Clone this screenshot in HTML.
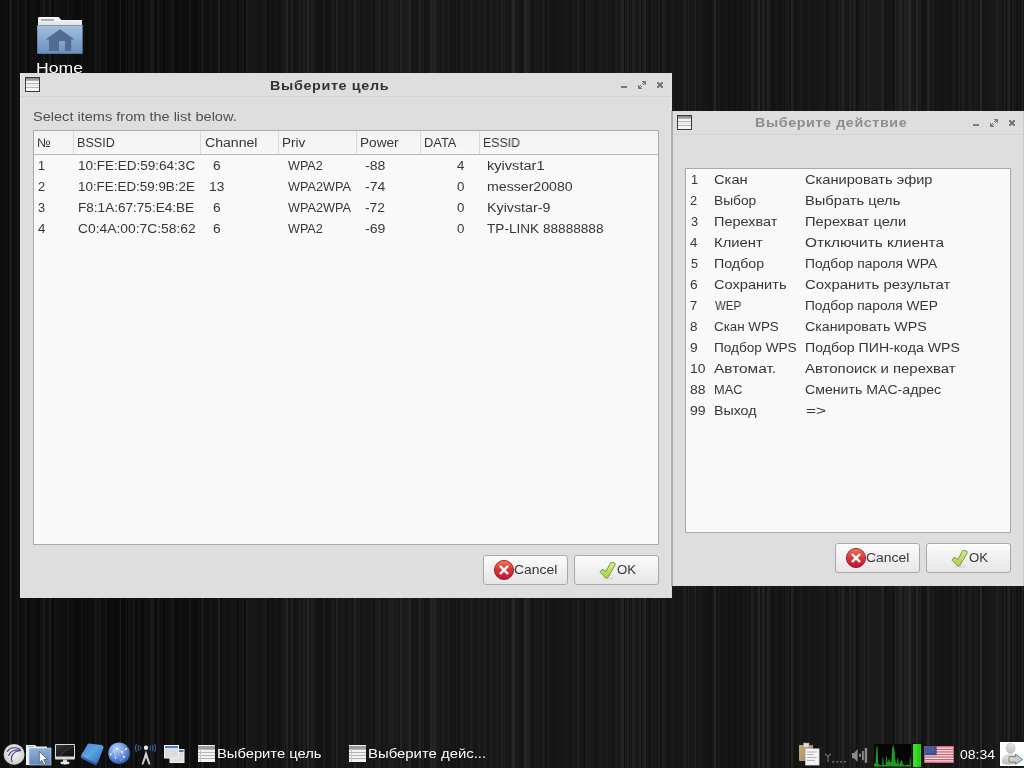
<!DOCTYPE html>
<html><head><meta charset="utf-8">
<style>
html,body{margin:0;padding:0;}
body{width:1024px;height:768px;position:relative;overflow:hidden;background:#1c1c1c;}
.t{position:absolute;white-space:pre;transform-origin:0 0;display:block;will-change:transform;}
#wall{position:absolute;left:0;top:0;width:1024px;height:768px;background:linear-gradient(90deg,rgb(13,13,13) 0px 2px,rgb(11,11,11) 2px 4px,rgb(20,20,20) 4px 5px,rgb(14,14,14) 5px 7px,rgb(17,17,17) 7px 8px,rgb(10,10,10) 8px 9px,rgb(28,28,28) 9px 12px,rgb(11,11,11) 12px 14px,rgb(16,16,16) 14px 17px,rgb(22,22,22) 17px 19px,rgb(11,11,11) 19px 20px,rgb(13,13,13) 20px 21px,rgb(14,14,14) 21px 23px,rgb(18,18,18) 23px 25px,rgb(23,23,23) 25px 27px,rgb(12,12,12) 27px 29px,rgb(15,15,15) 29px 31px,rgb(17,17,17) 31px 34px,rgb(16,16,16) 34px 36px,rgb(12,12,12) 36px 38px,rgb(12,12,12) 38px 39px,rgb(10,10,10) 39px 40px,rgb(16,16,16) 40px 41px,rgb(19,19,19) 41px 43px,rgb(25,25,25) 43px 45px,rgb(16,16,16) 45px 48px,rgb(19,19,19) 48px 49px,rgb(23,23,23) 49px 50px,rgb(29,29,29) 50px 51px,rgb(14,14,14) 51px 52px,rgb(10,10,10) 52px 54px,rgb(19,19,19) 54px 55px,rgb(17,17,17) 55px 56px,rgb(20,20,20) 56px 57px,rgb(15,15,15) 57px 58px,rgb(20,20,20) 58px 59px,rgb(15,15,15) 59px 62px,rgb(18,18,18) 62px 63px,rgb(13,13,13) 63px 64px,rgb(16,16,16) 64px 65px,rgb(17,17,17) 65px 66px,rgb(13,13,13) 66px 67px,rgb(20,20,20) 67px 69px,rgb(14,14,14) 69px 71px,rgb(17,17,17) 71px 73px,rgb(11,11,11) 73px 74px,rgb(14,14,14) 74px 75px,rgb(11,11,11) 75px 78px,rgb(12,12,12) 78px 79px,rgb(12,12,12) 79px 81px,rgb(22,22,22) 81px 82px,rgb(14,14,14) 82px 84px,rgb(13,13,13) 84px 87px,rgb(11,11,11) 87px 89px,rgb(17,17,17) 89px 91px,rgb(14,14,14) 91px 94px,rgb(20,20,20) 94px 95px,rgb(25,25,25) 95px 97px,rgb(15,15,15) 97px 98px,rgb(17,17,17) 98px 99px,rgb(26,26,26) 99px 100px,rgb(14,14,14) 100px 101px,rgb(19,19,19) 101px 102px,rgb(10,10,10) 102px 103px,rgb(14,14,14) 103px 105px,rgb(22,22,22) 105px 107px,rgb(10,10,10) 107px 109px,rgb(15,15,15) 109px 110px,rgb(12,12,12) 110px 112px,rgb(13,13,13) 112px 113px,rgb(15,15,15) 113px 114px,rgb(10,10,10) 114px 116px,rgb(10,10,10) 116px 117px,rgb(13,13,13) 117px 120px,rgb(29,29,29) 120px 121px,rgb(12,12,12) 121px 122px,rgb(11,11,11) 122px 123px,rgb(12,12,12) 123px 124px,rgb(11,11,11) 124px 126px,rgb(23,23,23) 126px 127px,rgb(10,10,10) 127px 128px,rgb(20,20,20) 128px 129px,rgb(20,20,20) 129px 131px,rgb(12,12,12) 131px 132px,rgb(17,17,17) 132px 133px,rgb(24,24,24) 133px 135px,rgb(11,11,11) 135px 137px,rgb(17,17,17) 137px 139px,rgb(21,21,21) 139px 140px,rgb(14,14,14) 140px 141px,rgb(13,13,13) 141px 144px,rgb(19,19,19) 144px 145px,rgb(15,15,15) 145px 146px,rgb(21,21,21) 146px 147px,rgb(18,18,18) 147px 148px,rgb(17,17,17) 148px 150px,rgb(27,27,27) 150px 153px,rgb(30,30,30) 153px 154px,rgb(13,13,13) 154px 155px,rgb(13,13,13) 155px 157px,rgb(21,21,21) 157px 160px,rgb(17,17,17) 160px 162px,rgb(16,16,16) 162px 163px,rgb(12,12,12) 163px 166px,rgb(21,21,21) 166px 167px,rgb(13,13,13) 167px 168px,rgb(19,19,19) 168px 170px,rgb(16,16,16) 170px 171px,rgb(24,24,24) 171px 174px,rgb(11,11,11) 174px 177px,rgb(11,11,11) 177px 178px,rgb(20,20,20) 178px 179px,rgb(17,17,17) 179px 180px,rgb(16,16,16) 180px 182px,rgb(19,19,19) 182px 183px,rgb(12,12,12) 183px 185px,rgb(15,15,15) 185px 187px,rgb(11,11,11) 187px 189px,rgb(29,29,29) 189px 190px,rgb(18,18,18) 190px 191px,rgb(16,16,16) 191px 194px,rgb(11,11,11) 194px 196px,rgb(14,14,14) 196px 198px,rgb(18,18,18) 198px 200px,rgb(12,12,12) 200px 201px,rgb(27,27,27) 201px 204px,rgb(15,15,15) 204px 206px,rgb(15,15,15) 206px 208px,rgb(17,17,17) 208px 209px,rgb(17,17,17) 209px 210px,rgb(21,21,21) 210px 212px,rgb(18,18,18) 212px 213px,rgb(17,17,17) 213px 214px,rgb(16,16,16) 214px 216px,rgb(19,19,19) 216px 218px,rgb(33,33,33) 218px 220px,rgb(13,13,13) 220px 223px,rgb(22,22,22) 223px 226px,rgb(18,18,18) 226px 228px,rgb(23,23,23) 228px 229px,rgb(14,14,14) 229px 230px,rgb(23,23,23) 230px 233px,rgb(22,22,22) 233px 235px,rgb(21,21,21) 235px 237px,rgb(15,15,15) 237px 239px,rgb(24,24,24) 239px 241px,rgb(15,15,15) 241px 242px,rgb(26,26,26) 242px 244px,rgb(15,15,15) 244px 246px,rgb(27,27,27) 246px 248px,rgb(24,24,24) 248px 251px,rgb(24,24,24) 251px 253px,rgb(24,24,24) 253px 254px,rgb(24,24,24) 254px 255px,rgb(22,22,22) 255px 257px,rgb(18,18,18) 257px 259px,rgb(20,20,20) 259px 260px,rgb(22,22,22) 260px 261px,rgb(18,18,18) 261px 262px,rgb(25,25,25) 262px 265px,rgb(28,28,28) 265px 267px,rgb(16,16,16) 267px 269px,rgb(18,18,18) 269px 270px,rgb(25,25,25) 270px 271px,rgb(17,17,17) 271px 273px,rgb(17,17,17) 273px 274px,rgb(23,23,23) 274px 277px,rgb(20,20,20) 277px 279px,rgb(16,16,16) 279px 280px,rgb(19,19,19) 280px 281px,rgb(23,23,23) 281px 283px,rgb(20,20,20) 283px 284px,rgb(32,32,32) 284px 285px,rgb(20,20,20) 285px 286px,rgb(35,35,35) 286px 288px,rgb(21,21,21) 288px 290px,rgb(23,23,23) 290px 291px,rgb(25,25,25) 291px 292px,rgb(37,37,37) 292px 293px,rgb(18,18,18) 293px 296px,rgb(22,22,22) 296px 299px,rgb(29,29,29) 299px 301px,rgb(19,19,19) 301px 303px,rgb(32,32,32) 303px 305px,rgb(25,25,25) 305px 306px,rgb(23,23,23) 306px 307px,rgb(37,37,37) 307px 309px,rgb(21,21,21) 309px 310px,rgb(28,28,28) 310px 312px,rgb(28,28,28) 312px 313px,rgb(30,30,30) 313px 314px,rgb(27,27,27) 314px 315px,rgb(20,20,20) 315px 316px,rgb(23,23,23) 316px 317px,rgb(21,21,21) 317px 319px,rgb(18,18,18) 319px 320px,rgb(19,19,19) 320px 323px,rgb(28,28,28) 323px 325px,rgb(21,21,21) 325px 326px,rgb(18,18,18) 326px 327px,rgb(20,20,20) 327px 330px,rgb(19,19,19) 330px 331px,rgb(27,27,27) 331px 334px,rgb(25,25,25) 334px 335px,rgb(21,21,21) 335px 336px,rgb(35,35,35) 336px 338px,rgb(23,23,23) 338px 341px,rgb(27,27,27) 341px 342px,rgb(28,28,28) 342px 343px,rgb(25,25,25) 343px 345px,rgb(21,21,21) 345px 347px,rgb(25,25,25) 347px 350px,rgb(24,24,24) 350px 352px,rgb(19,19,19) 352px 353px,rgb(28,28,28) 353px 354px,rgb(34,34,34) 354px 356px,rgb(25,25,25) 356px 359px,rgb(27,27,27) 359px 360px,rgb(21,21,21) 360px 362px,rgb(24,24,24) 362px 364px,rgb(25,25,25) 364px 367px,rgb(24,24,24) 367px 369px,rgb(23,23,23) 369px 371px,rgb(26,26,26) 371px 373px,rgb(20,20,20) 373px 375px,rgb(28,28,28) 375px 376px,rgb(28,28,28) 376px 378px,rgb(29,29,29) 378px 380px,rgb(28,28,28) 380px 381px,rgb(20,20,20) 381px 383px,rgb(25,25,25) 383px 386px,rgb(21,21,21) 386px 387px,rgb(22,22,22) 387px 388px,rgb(28,28,28) 388px 391px,rgb(30,30,30) 391px 394px,rgb(25,25,25) 394px 397px,rgb(29,29,29) 397px 398px,rgb(24,24,24) 398px 399px,rgb(20,20,20) 399px 400px,rgb(35,35,35) 400px 402px,rgb(25,25,25) 402px 404px,rgb(26,26,26) 404px 406px,rgb(23,23,23) 406px 407px,rgb(28,28,28) 407px 409px,rgb(38,38,38) 409px 411px,rgb(20,20,20) 411px 413px,rgb(23,23,23) 413px 415px,rgb(24,24,24) 415px 418px,rgb(24,24,24) 418px 419px,rgb(36,36,36) 419px 421px,rgb(23,23,23) 421px 423px,rgb(30,30,30) 423px 424px,rgb(20,20,20) 424px 427px,rgb(24,24,24) 427px 428px,rgb(20,20,20) 428px 429px,rgb(25,25,25) 429px 430px,rgb(36,36,36) 430px 433px,rgb(30,30,30) 433px 434px,rgb(40,40,40) 434px 435px,rgb(33,33,33) 435px 436px,rgb(27,27,27) 436px 439px,rgb(22,22,22) 439px 442px,rgb(28,28,28) 442px 444px,rgb(27,27,27) 444px 445px,rgb(22,22,22) 445px 446px,rgb(24,24,24) 446px 448px,rgb(28,28,28) 448px 450px,rgb(23,23,23) 450px 452px,rgb(21,21,21) 452px 453px,rgb(27,27,27) 453px 454px,rgb(21,21,21) 454px 456px,rgb(28,28,28) 456px 457px,rgb(22,22,22) 457px 458px,rgb(20,20,20) 458px 460px,rgb(26,26,26) 460px 462px,rgb(30,30,30) 462px 463px,rgb(22,22,22) 463px 464px,rgb(23,23,23) 464px 467px,rgb(24,24,24) 467px 468px,rgb(23,23,23) 468px 469px,rgb(23,23,23) 469px 470px,rgb(30,30,30) 470px 473px,rgb(22,22,22) 473px 476px,rgb(23,23,23) 476px 478px,rgb(29,29,29) 478px 480px,rgb(24,24,24) 480px 483px,rgb(28,28,28) 483px 484px,rgb(29,29,29) 484px 485px,rgb(27,27,27) 485px 487px,rgb(22,22,22) 487px 490px,rgb(30,30,30) 490px 492px,rgb(26,26,26) 492px 494px,rgb(23,23,23) 494px 496px,rgb(26,26,26) 496px 497px,rgb(28,28,28) 497px 499px,rgb(22,22,22) 499px 500px,rgb(23,23,23) 500px 501px,rgb(33,33,33) 501px 503px,rgb(23,23,23) 503px 504px,rgb(34,34,34) 504px 505px,rgb(20,20,20) 505px 506px,rgb(27,27,27) 506px 508px,rgb(21,21,21) 508px 510px,rgb(22,22,22) 510px 511px,rgb(28,28,28) 511px 512px,rgb(39,39,39) 512px 515px,rgb(25,25,25) 515px 517px,rgb(25,25,25) 517px 520px,rgb(20,20,20) 520px 522px,rgb(21,21,21) 522px 523px,rgb(20,20,20) 523px 524px,rgb(36,36,36) 524px 527px,rgb(32,32,32) 527px 530px,rgb(23,23,23) 530px 532px,rgb(19,19,19) 532px 533px,rgb(22,22,22) 533px 535px,rgb(29,29,29) 535px 536px,rgb(25,25,25) 536px 537px,rgb(25,25,25) 537px 539px,rgb(23,23,23) 539px 540px,rgb(24,24,24) 540px 541px,rgb(25,25,25) 541px 543px,rgb(33,33,33) 543px 544px,rgb(26,26,26) 544px 545px,rgb(20,20,20) 545px 547px,rgb(26,26,26) 547px 549px,rgb(27,27,27) 549px 550px,rgb(20,20,20) 550px 553px,rgb(21,21,21) 553px 555px,rgb(22,22,22) 555px 557px,rgb(24,24,24) 557px 560px,rgb(21,21,21) 560px 562px,rgb(26,26,26) 562px 563px,rgb(20,20,20) 563px 565px,rgb(24,24,24) 565px 566px,rgb(24,24,24) 566px 569px,rgb(21,21,21) 569px 571px,rgb(20,20,20) 571px 572px,rgb(27,27,27) 572px 573px,rgb(29,29,29) 573px 574px,rgb(20,20,20) 574px 575px,rgb(24,24,24) 575px 576px,rgb(23,23,23) 576px 577px,rgb(26,26,26) 577px 578px,rgb(35,35,35) 578px 579px,rgb(24,24,24) 579px 581px,rgb(24,24,24) 581px 583px,rgb(20,20,20) 583px 586px,rgb(34,34,34) 586px 587px,rgb(25,25,25) 587px 589px,rgb(29,29,29) 589px 591px,rgb(23,23,23) 591px 593px,rgb(28,28,28) 593px 594px,rgb(21,21,21) 594px 595px,rgb(22,22,22) 595px 598px,rgb(24,24,24) 598px 599px,rgb(28,28,28) 599px 602px,rgb(24,24,24) 602px 605px,rgb(28,28,28) 605px 608px,rgb(23,23,23) 608px 611px,rgb(21,21,21) 611px 612px,rgb(19,19,19) 612px 613px,rgb(23,23,23) 613px 614px,rgb(20,20,20) 614px 615px,rgb(27,27,27) 615px 618px,rgb(24,24,24) 618px 620px,rgb(28,28,28) 620px 621px,rgb(35,35,35) 621px 624px,rgb(19,19,19) 624px 625px,rgb(28,28,28) 625px 628px,rgb(32,32,32) 628px 629px,rgb(19,19,19) 629px 630px,rgb(28,28,28) 630px 631px,rgb(20,20,20) 631px 632px,rgb(34,34,34) 632px 635px,rgb(25,25,25) 635px 636px,rgb(25,25,25) 636px 638px,rgb(21,21,21) 638px 639px,rgb(34,34,34) 639px 641px,rgb(21,21,21) 641px 642px,rgb(28,28,28) 642px 644px,rgb(37,37,37) 644px 646px,rgb(23,23,23) 646px 648px,rgb(20,20,20) 648px 651px,rgb(26,26,26) 651px 652px,rgb(28,28,28) 652px 653px,rgb(23,23,23) 653px 654px,rgb(27,27,27) 654px 656px,rgb(23,23,23) 656px 657px,rgb(22,22,22) 657px 658px,rgb(29,29,29) 658px 660px,rgb(20,20,20) 660px 662px,rgb(29,29,29) 662px 665px,rgb(23,23,23) 665px 668px,rgb(19,19,19) 668px 670px,rgb(25,25,25) 670px 673px,rgb(29,29,29) 673px 674px,rgb(22,22,22) 674px 676px,rgb(22,22,22) 676px 677px,rgb(25,25,25) 677px 678px,rgb(23,23,23) 678px 680px,rgb(20,20,20) 680px 681px,rgb(20,20,20) 681px 683px,rgb(27,27,27) 683px 684px,rgb(31,31,31) 684px 686px,rgb(22,22,22) 686px 687px,rgb(22,22,22) 687px 688px,rgb(29,29,29) 688px 689px,rgb(28,28,28) 689px 690px,rgb(19,19,19) 690px 691px,rgb(28,28,28) 691px 692px,rgb(24,24,24) 692px 694px,rgb(28,28,28) 694px 695px,rgb(37,37,37) 695px 696px,rgb(23,23,23) 696px 697px,rgb(22,22,22) 697px 698px,rgb(22,22,22) 698px 699px,rgb(24,24,24) 699px 700px,rgb(23,23,23) 700px 703px,rgb(19,19,19) 703px 705px,rgb(27,27,27) 705px 706px,rgb(19,19,19) 706px 708px,rgb(20,20,20) 708px 710px,rgb(18,18,18) 710px 712px,rgb(23,23,23) 712px 714px,rgb(38,38,38) 714px 716px,rgb(20,20,20) 716px 717px,rgb(21,21,21) 717px 719px,rgb(28,28,28) 719px 720px,rgb(19,19,19) 720px 722px,rgb(21,21,21) 722px 723px,rgb(22,22,22) 723px 725px,rgb(22,22,22) 725px 726px,rgb(23,23,23) 726px 728px,rgb(19,19,19) 728px 730px,rgb(18,18,18) 730px 731px,rgb(23,23,23) 731px 733px,rgb(18,18,18) 733px 736px,rgb(20,20,20) 736px 737px,rgb(22,22,22) 737px 739px,rgb(19,19,19) 739px 742px,rgb(23,23,23) 742px 743px,rgb(23,23,23) 743px 745px,rgb(20,20,20) 745px 747px,rgb(26,26,26) 747px 748px,rgb(24,24,24) 748px 749px,rgb(19,19,19) 749px 751px,rgb(32,32,32) 751px 753px,rgb(26,26,26) 753px 754px,rgb(26,26,26) 754px 755px,rgb(19,19,19) 755px 756px,rgb(23,23,23) 756px 757px,rgb(25,25,25) 757px 758px,rgb(37,37,37) 758px 760px,rgb(21,21,21) 760px 761px,rgb(22,22,22) 761px 762px,rgb(34,34,34) 762px 765px,rgb(17,17,17) 765px 766px,rgb(26,26,26) 766px 767px,rgb(32,32,32) 767px 769px,rgb(32,32,32) 769px 770px,rgb(24,24,24) 770px 771px,rgb(20,20,20) 771px 773px,rgb(18,18,18) 773px 774px,rgb(21,21,21) 774px 775px,rgb(21,21,21) 775px 776px,rgb(24,24,24) 776px 779px,rgb(19,19,19) 779px 782px,rgb(27,27,27) 782px 783px,rgb(22,22,22) 783px 784px,rgb(20,20,20) 784px 785px,rgb(27,27,27) 785px 787px,rgb(24,24,24) 787px 788px,rgb(27,27,27) 788px 789px,rgb(24,24,24) 789px 790px,rgb(18,18,18) 790px 791px,rgb(36,36,36) 791px 793px,rgb(27,27,27) 793px 794px,rgb(20,20,20) 794px 797px,rgb(23,23,23) 797px 800px,rgb(27,27,27) 800px 802px,rgb(21,21,21) 802px 805px,rgb(21,21,21) 805px 807px,rgb(21,21,21) 807px 808px,rgb(25,25,25) 808px 811px,rgb(21,21,21) 811px 814px,rgb(24,24,24) 814px 815px,rgb(20,20,20) 815px 817px,rgb(23,23,23) 817px 818px,rgb(24,24,24) 818px 820px,rgb(23,23,23) 820px 821px,rgb(26,26,26) 821px 823px,rgb(25,25,25) 823px 825px,rgb(31,31,31) 825px 826px,rgb(18,18,18) 826px 828px,rgb(24,24,24) 828px 831px,rgb(23,23,23) 831px 832px,rgb(27,27,27) 832px 835px,rgb(21,21,21) 835px 838px,rgb(28,28,28) 838px 840px,rgb(25,25,25) 840px 841px,rgb(28,28,28) 841px 842px,rgb(36,36,36) 842px 844px,rgb(25,25,25) 844px 846px,rgb(23,23,23) 846px 849px,rgb(28,28,28) 849px 850px,rgb(37,37,37) 850px 851px,rgb(23,23,23) 851px 853px,rgb(28,28,28) 853px 854px,rgb(38,38,38) 854px 855px,rgb(24,24,24) 855px 856px,rgb(18,18,18) 856px 857px,rgb(21,21,21) 857px 860px,rgb(33,33,33) 860px 861px,rgb(25,25,25) 861px 863px,rgb(28,28,28) 863px 864px,rgb(36,36,36) 864px 865px,rgb(23,23,23) 865px 867px,rgb(29,29,29) 867px 870px,rgb(28,28,28) 870px 871px,rgb(25,25,25) 871px 872px,rgb(26,26,26) 872px 873px,rgb(23,23,23) 873px 874px,rgb(26,26,26) 874px 876px,rgb(27,27,27) 876px 878px,rgb(26,26,26) 878px 880px,rgb(28,28,28) 880px 882px,rgb(35,35,35) 882px 884px,rgb(20,20,20) 884px 885px,rgb(19,19,19) 885px 886px,rgb(20,20,20) 886px 887px,rgb(22,22,22) 887px 890px,rgb(26,26,26) 890px 891px,rgb(22,22,22) 891px 894px,rgb(19,19,19) 894px 895px,rgb(36,36,36) 895px 896px,rgb(28,28,28) 896px 898px,rgb(29,29,29) 898px 899px,rgb(37,37,37) 899px 902px,rgb(25,25,25) 902px 904px,rgb(29,29,29) 904px 905px,rgb(35,35,35) 905px 906px,rgb(29,29,29) 906px 908px,rgb(39,39,39) 908px 911px,rgb(28,28,28) 911px 912px,rgb(26,26,26) 912px 915px,rgb(21,21,21) 915px 916px,rgb(39,39,39) 916px 918px,rgb(27,27,27) 918px 919px,rgb(26,26,26) 919px 920px,rgb(31,31,31) 920px 921px,rgb(20,20,20) 921px 924px,rgb(19,19,19) 924px 925px,rgb(24,24,24) 925px 926px,rgb(22,22,22) 926px 927px,rgb(36,36,36) 927px 930px,rgb(22,22,22) 930px 931px,rgb(24,24,24) 931px 932px,rgb(28,28,28) 932px 934px,rgb(22,22,22) 934px 936px,rgb(23,23,23) 936px 938px,rgb(23,23,23) 938px 939px,rgb(22,22,22) 939px 941px,rgb(20,20,20) 941px 944px,rgb(21,21,21) 944px 945px,rgb(27,27,27) 945px 946px,rgb(22,22,22) 946px 949px,rgb(21,21,21) 949px 952px,rgb(25,25,25) 952px 953px,rgb(28,28,28) 953px 955px,rgb(22,22,22) 955px 957px,rgb(22,22,22) 957px 959px,rgb(36,36,36) 959px 960px,rgb(20,20,20) 960px 961px,rgb(26,26,26) 961px 962px,rgb(29,29,29) 962px 965px,rgb(22,22,22) 965px 966px,rgb(23,23,23) 966px 967px,rgb(20,20,20) 967px 968px,rgb(28,28,28) 968px 970px,rgb(28,28,28) 970px 971px,rgb(28,28,28) 971px 973px,rgb(19,19,19) 973px 974px,rgb(28,28,28) 974px 976px,rgb(25,25,25) 976px 977px,rgb(22,22,22) 977px 978px,rgb(26,26,26) 978px 979px,rgb(20,20,20) 979px 980px,rgb(39,39,39) 980px 982px,rgb(20,20,20) 982px 984px,rgb(20,20,20) 984px 985px,rgb(22,22,22) 985px 988px,rgb(25,25,25) 988px 989px,rgb(23,23,23) 989px 990px,rgb(26,26,26) 990px 993px,rgb(23,23,23) 993px 994px,rgb(21,21,21) 994px 995px,rgb(28,28,28) 995px 997px,rgb(29,29,29) 997px 998px,rgb(26,26,26) 998px 1000px,rgb(26,26,26) 1000px 1001px,rgb(24,24,24) 1001px 1003px,rgb(19,19,19) 1003px 1004px,rgb(38,38,38) 1004px 1005px,rgb(21,21,21) 1005px 1007px,rgb(28,28,28) 1007px 1008px,rgb(35,35,35) 1008px 1010px,rgb(19,19,19) 1010px 1012px,rgb(27,27,27) 1012px 1014px,rgb(22,22,22) 1014px 1015px,rgb(26,26,26) 1015px 1016px,rgb(20,20,20) 1016px 1018px,rgb(23,23,23) 1018px 1020px,rgb(22,22,22) 1020px 1022px,rgb(37,37,37) 1022px 1023px,rgb(23,23,23) 1023px 1025px);}
</style></head><body>
<div id="wall"></div>

<svg style="position:absolute;left:36px;top:15px;" width="48" height="41" viewBox="0 0 48 41">
<defs>
<linearGradient id="fb" x1="0" y1="0" x2="0" y2="1"><stop offset="0" stop-color="#a6c0de"/><stop offset="1" stop-color="#6890bd"/></linearGradient>
<linearGradient id="ft" x1="0" y1="0" x2="0" y2="1"><stop offset="0" stop-color="#ffffff"/><stop offset="1" stop-color="#dcdcdc"/></linearGradient>
</defs>
<path d="M2 3.2 Q2 1.9 3.3 1.9 L22.6 1.9 L25.2 4.9 L45.4 4.9 Q46 4.9 46 5.6 L46 11 L2 11 Z" fill="url(#ft)"/>
<rect x="5" y="4.1" width="13" height="1.7" fill="#98a4b2"/>
<rect x="1.2" y="10.1" width="45.4" height="28.7" fill="url(#fb)"/>
<rect x="1.2" y="10.1" width="45.4" height="0.8" fill="#7b8fa6"/>
<path d="M24 14.2 L9.5 24.6 L13 24.6 L13 36 L23 36 L23 26 L29 26 L29 36 L35.2 36 L35.2 24.6 L38.7 24.6 Z" fill="#506c8e"/>
</svg>
<span class="t" style="left:36.25px;top:60.20px;font-size:15px;line-height:15px;font-family:'Liberation Sans', sans-serif;font-weight:normal;color:#ffffff;transform:scaleX(1.1754);text-shadow:0 1px 1px #000;">Home</span>
<div style="position:absolute;left:671px;top:111px;width:353px;height:475px;background:#dedede;"></div>
<div style="position:absolute;left:671px;top:111px;width:2px;height:475px;background:#b4b4b4;"></div>
<div style="position:absolute;left:673px;top:134px;width:351px;height:1px;background:#d3d3d3;"></div>
<svg style="position:absolute;left:677px;top:115px;" width="15" height="15" viewBox="0 0 15 15">
<rect x="0.5" y="0.5" width="14" height="14" fill="#f6f6f6" stroke="#3a3a3a"/>
<rect x="1" y="1" width="13" height="1" fill="#8a8a8a"/>
<rect x="1" y="2" width="13" height="1" fill="#9a9a9a"/>
<rect x="1" y="3" width="13" height="1" fill="#b0b0b0"/>
<rect x="1" y="6" width="13" height="1" fill="#b4b4b4"/>
<rect x="1" y="10" width="13" height="1" fill="#b4b4b4"/>
<rect x="2" y="8" width="12" height="1" fill="#e2e2e2"/>
</svg>
<span class="t" style="left:754.84px;top:117.44px;font-size:12px;line-height:12px;font-family:'Liberation Sans', sans-serif;font-weight:bold;color:#8e8e8e;transform:scaleX(1.1908);letter-spacing:0.507px;">Выберите действие</span>
<div style="position:absolute;left:352px;top:0;width:0;height:0">
<div style="position:absolute;left:621px;top:124px;width:6px;height:2px;background:#7a7a7a;"></div>
<svg style="position:absolute;left:638px;top:119px" width="8" height="8" shape-rendering="crispEdges"><g fill="#7a7a7a"><rect x="4" y="0" width="1" height="1"/><rect x="5" y="0" width="1" height="1"/><rect x="6" y="0" width="1" height="1"/><rect x="7" y="0" width="1" height="1"/><rect x="5" y="1" width="1" height="1"/><rect x="6" y="1" width="1" height="1"/><rect x="7" y="1" width="1" height="1"/><rect x="4" y="2" width="1" height="1"/><rect x="6" y="2" width="1" height="1"/><rect x="7" y="2" width="1" height="1"/><rect x="5" y="3" width="1" height="1"/><rect x="7" y="3" width="1" height="1"/><rect x="0" y="4" width="1" height="1"/><rect x="2" y="4" width="1" height="1"/><rect x="0" y="5" width="1" height="1"/><rect x="1" y="5" width="1" height="1"/><rect x="3" y="5" width="1" height="1"/><rect x="0" y="6" width="1" height="1"/><rect x="1" y="6" width="1" height="1"/><rect x="2" y="6" width="1" height="1"/><rect x="0" y="7" width="1" height="1"/><rect x="1" y="7" width="1" height="1"/><rect x="2" y="7" width="1" height="1"/><rect x="3" y="7" width="1" height="1"/></g></svg>
<svg style="position:absolute;left:657px;top:120px" width="6" height="6" shape-rendering="crispEdges"><g fill="#7a7a7a"><rect x="0" y="0" width="1" height="1"/><rect x="1" y="0" width="1" height="1"/><rect x="4" y="0" width="1" height="1"/><rect x="5" y="0" width="1" height="1"/><rect x="0" y="1" width="1" height="1"/><rect x="1" y="1" width="1" height="1"/><rect x="2" y="1" width="1" height="1"/><rect x="3" y="1" width="1" height="1"/><rect x="4" y="1" width="1" height="1"/><rect x="5" y="1" width="1" height="1"/><rect x="1" y="2" width="1" height="1"/><rect x="2" y="2" width="1" height="1"/><rect x="3" y="2" width="1" height="1"/><rect x="4" y="2" width="1" height="1"/><rect x="1" y="3" width="1" height="1"/><rect x="2" y="3" width="1" height="1"/><rect x="3" y="3" width="1" height="1"/><rect x="4" y="3" width="1" height="1"/><rect x="0" y="4" width="1" height="1"/><rect x="1" y="4" width="1" height="1"/><rect x="2" y="4" width="1" height="1"/><rect x="3" y="4" width="1" height="1"/><rect x="4" y="4" width="1" height="1"/><rect x="5" y="4" width="1" height="1"/><rect x="0" y="5" width="1" height="1"/><rect x="1" y="5" width="1" height="1"/><rect x="4" y="5" width="1" height="1"/><rect x="5" y="5" width="1" height="1"/></g></svg>
</div>
<div style="position:absolute;left:1023px;top:111px;width:1px;height:475px;background:#c8c8c8;"></div>
<div style="position:absolute;left:685px;top:168px;width:326px;height:365px;box-sizing:border-box;border:1px solid #a9a9a9;background:#f9f9f9;"></div>
<span class="t" style="left:690.50px;top:174.42px;font-size:12.5px;line-height:12.5px;font-family:'Liberation Sans', sans-serif;font-weight:normal;color:#363636;transform:scaleX(1.0148);">1</span>
<span class="t" style="left:714.16px;top:174.42px;font-size:12.5px;line-height:12.5px;font-family:'Liberation Sans', sans-serif;font-weight:normal;color:#363636;transform:scaleX(1.1769);">Скан</span>
<span class="t" style="left:805.06px;top:174.42px;font-size:12.5px;line-height:12.5px;font-family:'Liberation Sans', sans-serif;font-weight:normal;color:#363636;transform:scaleX(1.1697);">Сканировать эфир</span>
<span class="t" style="left:690.36px;top:195.42px;font-size:12.5px;line-height:12.5px;font-family:'Liberation Sans', sans-serif;font-weight:normal;color:#363636;transform:scaleX(1.0242);">2</span>
<span class="t" style="left:714.32px;top:195.42px;font-size:12.5px;line-height:12.5px;font-family:'Liberation Sans', sans-serif;font-weight:normal;color:#363636;transform:scaleX(1.1011);">Выбор</span>
<span class="t" style="left:805.15px;top:195.42px;font-size:12.5px;line-height:12.5px;font-family:'Liberation Sans', sans-serif;font-weight:normal;color:#363636;transform:scaleX(1.1738);">Выбрать цель</span>
<span class="t" style="left:690.56px;top:216.42px;font-size:12.5px;line-height:12.5px;font-family:'Liberation Sans', sans-serif;font-weight:normal;color:#363636;transform:scaleX(1.0205);">3</span>
<span class="t" style="left:714.28px;top:216.42px;font-size:12.5px;line-height:12.5px;font-family:'Liberation Sans', sans-serif;font-weight:normal;color:#363636;transform:scaleX(1.1565);">Перехват</span>
<span class="t" style="left:805.16px;top:216.42px;font-size:12.5px;line-height:12.5px;font-family:'Liberation Sans', sans-serif;font-weight:normal;color:#363636;transform:scaleX(1.1753);">Перехват цели</span>
<span class="t" style="left:690.39px;top:237.42px;font-size:12.5px;line-height:12.5px;font-family:'Liberation Sans', sans-serif;font-weight:normal;color:#363636;transform:scaleX(1.0627);">4</span>
<span class="t" style="left:714.23px;top:237.42px;font-size:12.5px;line-height:12.5px;font-family:'Liberation Sans', sans-serif;font-weight:normal;color:#363636;transform:scaleX(1.1870);">Клиент</span>
<span class="t" style="left:805.08px;top:237.42px;font-size:12.5px;line-height:12.5px;font-family:'Liberation Sans', sans-serif;font-weight:normal;color:#363636;transform:scaleX(1.2305);">Отключить клиента</span>
<span class="t" style="left:690.55px;top:258.42px;font-size:12.5px;line-height:12.5px;font-family:'Liberation Sans', sans-serif;font-weight:normal;color:#363636;transform:scaleX(1.0028);">5</span>
<span class="t" style="left:714.30px;top:258.42px;font-size:12.5px;line-height:12.5px;font-family:'Liberation Sans', sans-serif;font-weight:normal;color:#363636;transform:scaleX(1.1381);">Подбор</span>
<span class="t" style="left:805.23px;top:258.42px;font-size:12.5px;line-height:12.5px;font-family:'Liberation Sans', sans-serif;font-weight:normal;color:#363636;transform:scaleX(1.1022);">Подбор пароля WPA</span>
<span class="t" style="left:690.26px;top:279.42px;font-size:12.5px;line-height:12.5px;font-family:'Liberation Sans', sans-serif;font-weight:normal;color:#363636;transform:scaleX(1.0997);">6</span>
<span class="t" style="left:714.16px;top:279.42px;font-size:12.5px;line-height:12.5px;font-family:'Liberation Sans', sans-serif;font-weight:normal;color:#363636;transform:scaleX(1.1684);">Сохранить</span>
<span class="t" style="left:805.05px;top:279.42px;font-size:12.5px;line-height:12.5px;font-family:'Liberation Sans', sans-serif;font-weight:normal;color:#363636;transform:scaleX(1.1962);">Сохранить результат</span>
<span class="t" style="left:690.45px;top:300.42px;font-size:12.5px;line-height:12.5px;font-family:'Liberation Sans', sans-serif;font-weight:normal;color:#363636;transform:scaleX(1.0394);">7</span>
<span class="t" style="left:714.54px;top:300.42px;font-size:12.5px;line-height:12.5px;font-family:'Liberation Sans', sans-serif;font-weight:normal;color:#363636;transform:scaleX(0.9149);">WEP</span>
<span class="t" style="left:805.23px;top:300.42px;font-size:12.5px;line-height:12.5px;font-family:'Liberation Sans', sans-serif;font-weight:normal;color:#363636;transform:scaleX(1.0988);">Подбор пароля WEP</span>
<span class="t" style="left:690.35px;top:321.42px;font-size:12.5px;line-height:12.5px;font-family:'Liberation Sans', sans-serif;font-weight:normal;color:#363636;transform:scaleX(1.0741);">8</span>
<span class="t" style="left:714.22px;top:321.42px;font-size:12.5px;line-height:12.5px;font-family:'Liberation Sans', sans-serif;font-weight:normal;color:#363636;transform:scaleX(1.0696);">Скан WPS</span>
<span class="t" style="left:805.08px;top:321.42px;font-size:12.5px;line-height:12.5px;font-family:'Liberation Sans', sans-serif;font-weight:normal;color:#363636;transform:scaleX(1.1384);">Сканировать WPS</span>
<span class="t" style="left:690.23px;top:342.42px;font-size:12.5px;line-height:12.5px;font-family:'Liberation Sans', sans-serif;font-weight:normal;color:#363636;transform:scaleX(1.0975);">9</span>
<span class="t" style="left:714.34px;top:342.42px;font-size:12.5px;line-height:12.5px;font-family:'Liberation Sans', sans-serif;font-weight:normal;color:#363636;transform:scaleX(1.0885);">Подбор WPS</span>
<span class="t" style="left:805.20px;top:342.42px;font-size:12.5px;line-height:12.5px;font-family:'Liberation Sans', sans-serif;font-weight:normal;color:#363636;transform:scaleX(1.1288);">Подбор ПИН-кода WPS</span>
<span class="t" style="left:690.41px;top:363.42px;font-size:12.5px;line-height:12.5px;font-family:'Liberation Sans', sans-serif;font-weight:normal;color:#363636;transform:scaleX(1.1082);">10</span>
<span class="t" style="left:714.25px;top:363.42px;font-size:12.5px;line-height:12.5px;font-family:'Liberation Sans', sans-serif;font-weight:normal;color:#363636;transform:scaleX(1.2340);">Автомат.</span>
<span class="t" style="left:805.15px;top:363.42px;font-size:12.5px;line-height:12.5px;font-family:'Liberation Sans', sans-serif;font-weight:normal;color:#363636;transform:scaleX(1.1951);">Автопоиск и перехват</span>
<span class="t" style="left:690.33px;top:384.42px;font-size:12.5px;line-height:12.5px;font-family:'Liberation Sans', sans-serif;font-weight:normal;color:#363636;transform:scaleX(1.1170);">88</span>
<span class="t" style="left:714.36px;top:384.42px;font-size:12.5px;line-height:12.5px;font-family:'Liberation Sans', sans-serif;font-weight:normal;color:#363636;transform:scaleX(1.0222);">MAC</span>
<span class="t" style="left:805.08px;top:384.42px;font-size:12.5px;line-height:12.5px;font-family:'Liberation Sans', sans-serif;font-weight:normal;color:#363636;transform:scaleX(1.1298);">Сменить MAC-адрес</span>
<span class="t" style="left:690.22px;top:405.42px;font-size:12.5px;line-height:12.5px;font-family:'Liberation Sans', sans-serif;font-weight:normal;color:#363636;transform:scaleX(1.1279);">99</span>
<span class="t" style="left:714.29px;top:405.42px;font-size:12.5px;line-height:12.5px;font-family:'Liberation Sans', sans-serif;font-weight:normal;color:#363636;transform:scaleX(1.1361);">Выход</span>
<span class="t" style="left:805.57px;top:405.42px;font-size:12.5px;line-height:12.5px;font-family:'Liberation Sans', sans-serif;font-weight:normal;color:#363636;transform:scaleX(1.3786);">=&gt;</span>
<div style="position:absolute;left:835px;top:543px;width:83px;height:28px;border:1px solid #a9a9a9;border-radius:3px;background:linear-gradient(#fbfbfb,#e6e6e6);box-shadow:inset 0 1px 0 #fff;"></div>
<svg style="position:absolute;left:845px;top:546.9px;" width="22" height="22" viewBox="0 0 22 22">
<defs><linearGradient id="rg" x1="0" y1="0" x2="0" y2="1"><stop offset="0" stop-color="#ef7a5c"/><stop offset="0.45" stop-color="#dc3a36"/><stop offset="1" stop-color="#b8153a"/></linearGradient></defs>
<circle cx="11" cy="11" r="9.6" fill="url(#rg)" stroke="#8e1e2a" stroke-width="0.9"/>
<path d="M7.6 7.6 L14.4 14.4 M14.4 7.6 L7.6 14.4" stroke="#ffffff" stroke-width="2.3" stroke-linecap="round"/>
</svg>
<span class="t" style="left:865.79px;top:552.42px;font-size:12.5px;line-height:12.5px;font-family:'Liberation Sans', sans-serif;font-weight:normal;color:#363636;transform:scaleX(1.1138);">Cancel</span>
<div style="position:absolute;left:926px;top:543px;width:83px;height:28px;border:1px solid #a9a9a9;border-radius:3px;background:linear-gradient(#fbfbfb,#e6e6e6);box-shadow:inset 0 1px 0 #fff;"></div>
<svg style="position:absolute;left:950px;top:548px;" width="20" height="21" viewBox="0 0 20 21">
<defs><linearGradient id="gg" x1="0" y1="0" x2="0" y2="1"><stop offset="0" stop-color="#d6ee86"/><stop offset="1" stop-color="#acd04a"/></linearGradient></defs>
<ellipse cx="10" cy="18.3" rx="6" ry="1.6" fill="#000" opacity="0.06"/>
<path d="M2.1 12.3 L4.1 9.3 L8 11.4 L12.7 2.7 Q15 1.9 17 3.3 L17.1 5.1 L9.7 17.6 Q8.6 18.5 7.3 17.6 Z" fill="url(#gg)" stroke="#6f8f2c" stroke-width="0.9" stroke-linejoin="round"/>
</svg>
<span class="t" style="left:968.87px;top:552.42px;font-size:12.5px;line-height:12.5px;font-family:'Liberation Sans', sans-serif;font-weight:normal;color:#363636;transform:scaleX(1.0561);">OK</span>
<div style="position:absolute;left:20px;top:73px;width:652px;height:525px;background:#dedede;"></div>
<div style="position:absolute;left:20px;top:73px;width:1px;height:525px;background:#e9e9e9;"></div>
<div style="position:absolute;left:20px;top:96px;width:652px;height:1px;background:#d3d3d3;"></div>
<svg style="position:absolute;left:25px;top:77px;" width="15" height="15" viewBox="0 0 15 15">
<rect x="0.5" y="0.5" width="14" height="14" fill="#f6f6f6" stroke="#3a3a3a"/>
<rect x="1" y="1" width="13" height="1" fill="#8a8a8a"/>
<rect x="1" y="2" width="13" height="1" fill="#9a9a9a"/>
<rect x="1" y="3" width="13" height="1" fill="#b0b0b0"/>
<rect x="1" y="6" width="13" height="1" fill="#b4b4b4"/>
<rect x="1" y="10" width="13" height="1" fill="#b4b4b4"/>
<rect x="2" y="8" width="12" height="1" fill="#e2e2e2"/>
</svg>
<span class="t" style="left:269.74px;top:79.64px;font-size:12px;line-height:12px;font-family:'Liberation Sans', sans-serif;font-weight:bold;color:#333333;transform:scaleX(1.1966);letter-spacing:0.536px;">Выберите цель</span>
<div style="position:absolute;left:621px;top:86px;width:6px;height:2px;background:#7a7a7a;"></div>
<svg style="position:absolute;left:638px;top:81px" width="8" height="8" shape-rendering="crispEdges"><g fill="#7a7a7a"><rect x="4" y="0" width="1" height="1"/><rect x="5" y="0" width="1" height="1"/><rect x="6" y="0" width="1" height="1"/><rect x="7" y="0" width="1" height="1"/><rect x="5" y="1" width="1" height="1"/><rect x="6" y="1" width="1" height="1"/><rect x="7" y="1" width="1" height="1"/><rect x="4" y="2" width="1" height="1"/><rect x="6" y="2" width="1" height="1"/><rect x="7" y="2" width="1" height="1"/><rect x="5" y="3" width="1" height="1"/><rect x="7" y="3" width="1" height="1"/><rect x="0" y="4" width="1" height="1"/><rect x="2" y="4" width="1" height="1"/><rect x="0" y="5" width="1" height="1"/><rect x="1" y="5" width="1" height="1"/><rect x="3" y="5" width="1" height="1"/><rect x="0" y="6" width="1" height="1"/><rect x="1" y="6" width="1" height="1"/><rect x="2" y="6" width="1" height="1"/><rect x="0" y="7" width="1" height="1"/><rect x="1" y="7" width="1" height="1"/><rect x="2" y="7" width="1" height="1"/><rect x="3" y="7" width="1" height="1"/></g></svg>
<svg style="position:absolute;left:657px;top:82px" width="6" height="6" shape-rendering="crispEdges"><g fill="#7a7a7a"><rect x="0" y="0" width="1" height="1"/><rect x="1" y="0" width="1" height="1"/><rect x="4" y="0" width="1" height="1"/><rect x="5" y="0" width="1" height="1"/><rect x="0" y="1" width="1" height="1"/><rect x="1" y="1" width="1" height="1"/><rect x="2" y="1" width="1" height="1"/><rect x="3" y="1" width="1" height="1"/><rect x="4" y="1" width="1" height="1"/><rect x="5" y="1" width="1" height="1"/><rect x="1" y="2" width="1" height="1"/><rect x="2" y="2" width="1" height="1"/><rect x="3" y="2" width="1" height="1"/><rect x="4" y="2" width="1" height="1"/><rect x="1" y="3" width="1" height="1"/><rect x="2" y="3" width="1" height="1"/><rect x="3" y="3" width="1" height="1"/><rect x="4" y="3" width="1" height="1"/><rect x="0" y="4" width="1" height="1"/><rect x="1" y="4" width="1" height="1"/><rect x="2" y="4" width="1" height="1"/><rect x="3" y="4" width="1" height="1"/><rect x="4" y="4" width="1" height="1"/><rect x="5" y="4" width="1" height="1"/><rect x="0" y="5" width="1" height="1"/><rect x="1" y="5" width="1" height="1"/><rect x="4" y="5" width="1" height="1"/><rect x="5" y="5" width="1" height="1"/></g></svg>
<span class="t" style="left:33.04px;top:111.42px;font-size:12.5px;line-height:12.5px;font-family:'Liberation Sans', sans-serif;font-weight:normal;color:#505050;transform:scaleX(1.1635);">Select items from the list below.</span>
<div style="position:absolute;left:33px;top:130px;width:626px;height:415px;box-sizing:border-box;border:1px solid #a9a9a9;background:#f9f9f9;"></div>
<div style="position:absolute;left:34px;top:131px;width:624px;height:23px;background:linear-gradient(#f3f3f3,#f7f7f7);"></div>
<div style="position:absolute;left:34px;top:154px;width:624px;height:1px;background:#b8b8b8;"></div>
<div style="position:absolute;left:73px;top:131px;width:1px;height:23px;background:#d9d9d9;"></div>
<div style="position:absolute;left:200px;top:131px;width:1px;height:23px;background:#d9d9d9;"></div>
<div style="position:absolute;left:278px;top:131px;width:1px;height:23px;background:#d9d9d9;"></div>
<div style="position:absolute;left:356px;top:131px;width:1px;height:23px;background:#d9d9d9;"></div>
<div style="position:absolute;left:420px;top:131px;width:1px;height:23px;background:#d9d9d9;"></div>
<div style="position:absolute;left:479px;top:131px;width:1px;height:23px;background:#d9d9d9;"></div>
<span class="t" style="left:36.73px;top:137.02px;font-size:12.5px;line-height:12.5px;font-family:'Liberation Sans', sans-serif;font-weight:normal;color:#363636;transform:scaleX(1.0212);">№</span>
<span class="t" style="left:77.47px;top:137.02px;font-size:12.5px;line-height:12.5px;font-family:'Liberation Sans', sans-serif;font-weight:normal;color:#363636;transform:scaleX(1.0053);">BSSID</span>
<span class="t" style="left:204.88px;top:137.02px;font-size:12.5px;line-height:12.5px;font-family:'Liberation Sans', sans-serif;font-weight:normal;color:#363636;transform:scaleX(1.1266);">Channel</span>
<span class="t" style="left:282.29px;top:137.02px;font-size:12.5px;line-height:12.5px;font-family:'Liberation Sans', sans-serif;font-weight:normal;color:#363636;transform:scaleX(1.0814);">Priv</span>
<span class="t" style="left:360.28px;top:137.02px;font-size:12.5px;line-height:12.5px;font-family:'Liberation Sans', sans-serif;font-weight:normal;color:#363636;transform:scaleX(1.0909);">Power</span>
<span class="t" style="left:424.44px;top:137.02px;font-size:12.5px;line-height:12.5px;font-family:'Liberation Sans', sans-serif;font-weight:normal;color:#363636;transform:scaleX(1.0312);">DATA</span>
<span class="t" style="left:483.49px;top:137.02px;font-size:12.5px;line-height:12.5px;font-family:'Liberation Sans', sans-serif;font-weight:normal;color:#363636;transform:scaleX(0.9862);">ESSID</span>
<span class="t" style="left:38.30px;top:160.42px;font-size:12.5px;line-height:12.5px;font-family:'Liberation Sans', sans-serif;font-weight:normal;color:#363636;transform:scaleX(1.0148);">1</span>
<span class="t" style="left:78.34px;top:160.42px;font-size:12.5px;line-height:12.5px;font-family:'Liberation Sans', sans-serif;font-weight:normal;color:#363636;transform:scaleX(1.0807);">10:FE:ED:59:64:3C</span>
<span class="t" style="left:212.70px;top:160.42px;font-size:12.5px;line-height:12.5px;font-family:'Liberation Sans', sans-serif;font-weight:normal;color:#363636;transform:scaleX(1.0997);">6</span>
<span class="t" style="left:287.63px;top:160.42px;font-size:12.5px;line-height:12.5px;font-family:'Liberation Sans', sans-serif;font-weight:normal;color:#363636;transform:scaleX(1.0078);">WPA2</span>
<span class="t" style="left:364.56px;top:160.42px;font-size:12.5px;line-height:12.5px;font-family:'Liberation Sans', sans-serif;font-weight:normal;color:#363636;transform:scaleX(1.1258);">-88</span>
<span class="t" style="left:457.00px;top:160.42px;font-size:12.5px;line-height:12.5px;font-family:'Liberation Sans', sans-serif;font-weight:normal;color:#363636;transform:scaleX(1.0627);">4</span>
<span class="t" style="left:487.19px;top:160.42px;font-size:12.5px;line-height:12.5px;font-family:'Liberation Sans', sans-serif;font-weight:normal;color:#363636;transform:scaleX(1.1664);">kyivstar1</span>
<span class="t" style="left:38.16px;top:181.42px;font-size:12.5px;line-height:12.5px;font-family:'Liberation Sans', sans-serif;font-weight:normal;color:#363636;transform:scaleX(1.0242);">2</span>
<span class="t" style="left:78.35px;top:181.42px;font-size:12.5px;line-height:12.5px;font-family:'Liberation Sans', sans-serif;font-weight:normal;color:#363636;transform:scaleX(1.0713);">10:FE:ED:59:9B:2E</span>
<span class="t" style="left:208.75px;top:181.42px;font-size:12.5px;line-height:12.5px;font-family:'Liberation Sans', sans-serif;font-weight:normal;color:#363636;transform:scaleX(1.0998);">13</span>
<span class="t" style="left:287.63px;top:181.42px;font-size:12.5px;line-height:12.5px;font-family:'Liberation Sans', sans-serif;font-weight:normal;color:#363636;transform:scaleX(1.0161);">WPA2WPA</span>
<span class="t" style="left:364.56px;top:181.42px;font-size:12.5px;line-height:12.5px;font-family:'Liberation Sans', sans-serif;font-weight:normal;color:#363636;transform:scaleX(1.1232);">-74</span>
<span class="t" style="left:457.13px;top:181.42px;font-size:12.5px;line-height:12.5px;font-family:'Liberation Sans', sans-serif;font-weight:normal;color:#363636;transform:scaleX(1.0626);">0</span>
<span class="t" style="left:487.23px;top:181.42px;font-size:12.5px;line-height:12.5px;font-family:'Liberation Sans', sans-serif;font-weight:normal;color:#363636;transform:scaleX(1.1313);">messer20080</span>
<span class="t" style="left:38.36px;top:202.42px;font-size:12.5px;line-height:12.5px;font-family:'Liberation Sans', sans-serif;font-weight:normal;color:#363636;transform:scaleX(1.0205);">3</span>
<span class="t" style="left:78.11px;top:202.42px;font-size:12.5px;line-height:12.5px;font-family:'Liberation Sans', sans-serif;font-weight:normal;color:#363636;transform:scaleX(1.0849);">F8:1A:67:75:E4:BE</span>
<span class="t" style="left:212.70px;top:202.42px;font-size:12.5px;line-height:12.5px;font-family:'Liberation Sans', sans-serif;font-weight:normal;color:#363636;transform:scaleX(1.0997);">6</span>
<span class="t" style="left:287.63px;top:202.42px;font-size:12.5px;line-height:12.5px;font-family:'Liberation Sans', sans-serif;font-weight:normal;color:#363636;transform:scaleX(1.0161);">WPA2WPA</span>
<span class="t" style="left:364.57px;top:202.42px;font-size:12.5px;line-height:12.5px;font-family:'Liberation Sans', sans-serif;font-weight:normal;color:#363636;transform:scaleX(1.1079);">-72</span>
<span class="t" style="left:457.13px;top:202.42px;font-size:12.5px;line-height:12.5px;font-family:'Liberation Sans', sans-serif;font-weight:normal;color:#363636;transform:scaleX(1.0626);">0</span>
<span class="t" style="left:487.10px;top:202.42px;font-size:12.5px;line-height:12.5px;font-family:'Liberation Sans', sans-serif;font-weight:normal;color:#363636;transform:scaleX(1.1404);">Kyivstar-9</span>
<span class="t" style="left:38.19px;top:223.42px;font-size:12.5px;line-height:12.5px;font-family:'Liberation Sans', sans-serif;font-weight:normal;color:#363636;transform:scaleX(1.0627);">4</span>
<span class="t" style="left:77.99px;top:223.42px;font-size:12.5px;line-height:12.5px;font-family:'Liberation Sans', sans-serif;font-weight:normal;color:#363636;transform:scaleX(1.1067);">C0:4A:00:7C:58:62</span>
<span class="t" style="left:212.70px;top:223.42px;font-size:12.5px;line-height:12.5px;font-family:'Liberation Sans', sans-serif;font-weight:normal;color:#363636;transform:scaleX(1.0997);">6</span>
<span class="t" style="left:287.63px;top:223.42px;font-size:12.5px;line-height:12.5px;font-family:'Liberation Sans', sans-serif;font-weight:normal;color:#363636;transform:scaleX(1.0078);">WPA2</span>
<span class="t" style="left:364.56px;top:223.42px;font-size:12.5px;line-height:12.5px;font-family:'Liberation Sans', sans-serif;font-weight:normal;color:#363636;transform:scaleX(1.1276);">-69</span>
<span class="t" style="left:457.13px;top:223.42px;font-size:12.5px;line-height:12.5px;font-family:'Liberation Sans', sans-serif;font-weight:normal;color:#363636;transform:scaleX(1.0626);">0</span>
<span class="t" style="left:486.69px;top:223.42px;font-size:12.5px;line-height:12.5px;font-family:'Liberation Sans', sans-serif;font-weight:normal;color:#363636;transform:scaleX(1.0884);">TP-LINK 88888888</span>
<div style="position:absolute;left:483px;top:555px;width:83px;height:28px;border:1px solid #a9a9a9;border-radius:3px;background:linear-gradient(#fbfbfb,#e6e6e6);box-shadow:inset 0 1px 0 #fff;"></div>
<svg style="position:absolute;left:493px;top:558.9px;" width="22" height="22" viewBox="0 0 22 22">
<defs><linearGradient id="rg" x1="0" y1="0" x2="0" y2="1"><stop offset="0" stop-color="#ef7a5c"/><stop offset="0.45" stop-color="#dc3a36"/><stop offset="1" stop-color="#b8153a"/></linearGradient></defs>
<circle cx="11" cy="11" r="9.6" fill="url(#rg)" stroke="#8e1e2a" stroke-width="0.9"/>
<path d="M7.6 7.6 L14.4 14.4 M14.4 7.6 L7.6 14.4" stroke="#ffffff" stroke-width="2.3" stroke-linecap="round"/>
</svg>
<span class="t" style="left:514.09px;top:564.22px;font-size:12.5px;line-height:12.5px;font-family:'Liberation Sans', sans-serif;font-weight:normal;color:#363636;transform:scaleX(1.1138);">Cancel</span>
<div style="position:absolute;left:574px;top:555px;width:83px;height:28px;border:1px solid #a9a9a9;border-radius:3px;background:linear-gradient(#fbfbfb,#e6e6e6);box-shadow:inset 0 1px 0 #fff;"></div>
<svg style="position:absolute;left:598px;top:560px;" width="20" height="21" viewBox="0 0 20 21">
<defs><linearGradient id="gg" x1="0" y1="0" x2="0" y2="1"><stop offset="0" stop-color="#d6ee86"/><stop offset="1" stop-color="#acd04a"/></linearGradient></defs>
<ellipse cx="10" cy="18.3" rx="6" ry="1.6" fill="#000" opacity="0.06"/>
<path d="M2.1 12.3 L4.1 9.3 L8 11.4 L12.7 2.7 Q15 1.9 17 3.3 L17.1 5.1 L9.7 17.6 Q8.6 18.5 7.3 17.6 Z" fill="url(#gg)" stroke="#6f8f2c" stroke-width="0.9" stroke-linejoin="round"/>
</svg>
<span class="t" style="left:617.17px;top:564.22px;font-size:12.5px;line-height:12.5px;font-family:'Liberation Sans', sans-serif;font-weight:normal;color:#363636;transform:scaleX(1.0561);">OK</span>
<div style="position:absolute;left:671px;top:111px;width:2px;height:475px;background:#acacac;"></div>
<div style="position:absolute;left:670px;top:73px;width:1px;height:525px;background:#e6e6e6;"></div>
<div style="position:absolute;left:671px;top:586px;width:1px;height:12px;background:#d6d6d6;"></div>
<svg style="position:absolute;left:3px;top:743px;" width="23" height="23" viewBox="0 0 23 23">
<defs><radialGradient id="sg" cx="0.5" cy="0.45" r="0.6"><stop offset="0" stop-color="#f2f3ee"/><stop offset="0.75" stop-color="#d6d8d0"/><stop offset="1" stop-color="#9a9c94"/></radialGradient></defs>
<circle cx="11.1" cy="11.4" r="10.5" fill="url(#sg)"/>
<path d="M4.4 8.4 Q8 2.5 17.2 6.2" stroke="#3d3a8e" stroke-width="1.1" fill="none" stroke-linecap="round"/>
<path d="M5.7 12.5 Q8.5 5.5 17.6 7.4" stroke="#3d3a8e" stroke-width="1.1" fill="none" stroke-linecap="round"/>
<path d="M9.1 18.6 Q6.5 13 12.8 8.6 Q15 7.6 17.2 7.6" stroke="#3d3a8e" stroke-width="1.1" fill="none" stroke-linecap="round"/>
</svg>
<svg style="position:absolute;left:25px;top:743px;" width="27" height="24" viewBox="0 0 27 24">
<defs><linearGradient id="fgb" x1="0" y1="0" x2="0" y2="1"><stop offset="0" stop-color="#8fb2d8"/><stop offset="1" stop-color="#5f88b8"/></linearGradient></defs>
<path d="M1 2 L10 2 L11.5 3.5 L22 3.5 L22 22 L1 22 Z" fill="#eef0f2"/>
<rect x="2.5" y="3" width="6.5" height="1" fill="#a8b0ba"/>
<rect x="4" y="5" width="22" height="17" fill="url(#fgb)" stroke="#d8e2ee" stroke-width="0.6"/>
<path d="M14.3 8.3 L14.3 19.8 L16.8 17.4 L18.8 21.8 L20.8 20.9 L18.8 16.6 L22.3 16.4 Z" fill="#f4f4f4" stroke="#4a5a6a" stroke-width="0.8" stroke-linejoin="round"/>
</svg>
<svg style="position:absolute;left:54px;top:743px;" width="22" height="22" viewBox="0 0 22 22">
<defs><linearGradient id="scr" x1="0" y1="0" x2="1" y2="1"><stop offset="0" stop-color="#3a3a3a"/><stop offset="0.5" stop-color="#1c1c1c"/><stop offset="1" stop-color="#101010"/></linearGradient></defs>
<rect x="1" y="1" width="20" height="15.5" rx="1" fill="#d9d9d9"/>
<rect x="2" y="2" width="18" height="11.5" fill="url(#scr)"/>
<path d="M6 13.5 Q12 6 20 4 L20 2.8 Q11 5 4.5 13.5 Z" fill="#484848" opacity="0.6"/>
<rect x="9" y="16.5" width="4" height="2.5" fill="#cfcfcf"/>
<ellipse cx="11" cy="19.8" rx="4.6" ry="1.6" fill="#eeeeee"/>
</svg>
<svg style="position:absolute;left:80px;top:742px;" width="25" height="24" viewBox="0 0 25 24">
<defs><linearGradient id="bd" x1="0" y1="0" x2="1" y2="1"><stop offset="0" stop-color="#4a7ee0"/><stop offset="0.45" stop-color="#5aa6dc"/><stop offset="1" stop-color="#2f5cc4"/></linearGradient></defs>
<path d="M9 1.5 L21.5 3 Q24 3.5 23.4 6.3 L17.4 21.6 Q16.4 23.3 14.4 22.6 L2 16.6 Q0.3 15.6 1.1 13.6 L7.4 2.6 Q8 1.4 9 1.5 Z" fill="url(#bd)"/>
<path d="M2 16.6 L14.4 22.6 Q16.4 23.3 17.4 21.6 L18.2 19.6 L16 20.3 Q15 20.8 13.5 20 L1.3 14 Q0.6 15.5 2 16.6 Z" fill="#2a4fa8" opacity="0.8"/>
</svg>
<svg style="position:absolute;left:107px;top:741px;" width="24" height="24" viewBox="0 0 24 24">
<defs><radialGradient id="gl" cx="0.4" cy="0.3" r="0.75"><stop offset="0" stop-color="#b8d2f6"/><stop offset="0.5" stop-color="#6d98e0"/><stop offset="1" stop-color="#2d58b8"/></radialGradient></defs>
<circle cx="12" cy="12.2" r="10.8" fill="url(#gl)"/>
<path d="M3.5 13.5 L7 9 L10 7.5 L15 11 L19 8 M15 11 L17 16 L13.5 20 M7 9 L8.5 17" stroke="#e8f0fc" stroke-width="0.5" fill="none" opacity="0.85"/>
<g fill="#ffffff"><circle cx="3.5" cy="13.5" r="0.9"/><circle cx="10" cy="7.5" r="0.9"/><circle cx="15" cy="11" r="0.9"/><circle cx="19" cy="8" r="0.9"/><circle cx="17" cy="16" r="0.9"/><circle cx="8.5" cy="17" r="0.8"/></g>
</svg>
<svg style="position:absolute;left:135px;top:742px;" width="22" height="24" viewBox="0 0 22 24">
<g stroke="#3a5ea8" stroke-width="1.1" fill="none">
<path d="M1.5 2 Q-0.5 6 1.5 10"/><path d="M3.8 3 Q2.3 6 3.8 9"/><path d="M6 4 Q5 6 6 8"/>
<path d="M19.5 2 Q21.5 6 19.5 10"/><path d="M17.2 3 Q18.7 6 17.2 9"/><path d="M15 4 Q16 6 15 8"/>
</g>
<circle cx="11" cy="5.8" r="2.2" fill="#e8e8e8"/>
<path d="M11 8.5 L6.5 22.6 L8.3 22.6 L11 15.5 L13.7 22.6 L15.5 22.6 Z" fill="#d4d4d4"/>
</svg>
<svg style="position:absolute;left:164px;top:745px;" width="21" height="19" viewBox="0 0 21 19">
<rect x="5.5" y="4" width="15" height="14" fill="#f2f2f2"/>
<rect x="6.5" y="5" width="13" height="12" fill="#dedede"/>
<rect x="6.5" y="5" width="13" height="2" fill="#4f78c6"/>
<rect x="0" y="0" width="15" height="13.5" fill="#f2f2f2"/>
<rect x="1" y="1" width="13" height="11.5" fill="#dcdcdc"/>
<rect x="1" y="1" width="13" height="2" fill="#4f78c6"/>
</svg>
<svg style="position:absolute;left:198px;top:745px;shape-rendering:crispEdges;" width="17" height="17" viewBox="0 0 17 17">
<rect x="0" y="0" width="17" height="17" fill="#f2f2f2"/>
<rect x="0" y="1" width="17" height="3" fill="#9c9c9c"/>
<rect x="0" y="4" width="17" height="0.6" fill="#b8b8b8"/>
<rect x="0" y="6.5" width="17" height="1" fill="#b6b6b6"/>
<rect x="0" y="10" width="17" height="1" fill="#b6b6b6"/>
<rect x="0" y="13" width="17" height="1" fill="#b6b6b6"/>
<rect x="2" y="4" width="1" height="13" fill="#c4c4c4"/>
</svg>
<span class="t" style="left:216.89px;top:748.39px;font-size:12.3px;line-height:12.3px;font-family:'Liberation Sans', sans-serif;font-weight:normal;color:#ffffff;transform:scaleX(1.1990);">Выберите цель</span>
<svg style="position:absolute;left:349px;top:745px;shape-rendering:crispEdges;" width="17" height="17" viewBox="0 0 17 17">
<rect x="0" y="0" width="17" height="17" fill="#f2f2f2"/>
<rect x="0" y="1" width="17" height="3" fill="#9c9c9c"/>
<rect x="0" y="4" width="17" height="0.6" fill="#b8b8b8"/>
<rect x="0" y="6.5" width="17" height="1" fill="#b6b6b6"/>
<rect x="0" y="10" width="17" height="1" fill="#b6b6b6"/>
<rect x="0" y="13" width="17" height="1" fill="#b6b6b6"/>
<rect x="2" y="4" width="1" height="13" fill="#c4c4c4"/>
</svg>
<span class="t" style="left:368.18px;top:748.39px;font-size:12.3px;line-height:12.3px;font-family:'Liberation Sans', sans-serif;font-weight:normal;color:#ffffff;transform:scaleX(1.2112);">Выберите дейс...</span>
<svg style="position:absolute;left:798px;top:742px;" width="23" height="25" viewBox="0 0 23 25">
<defs><linearGradient id="cb" x1="0" y1="0" x2="1" y2="1"><stop offset="0" stop-color="#c9a978"/><stop offset="1" stop-color="#a88858"/></linearGradient></defs>
<rect x="1" y="3" width="14" height="16" rx="1" fill="url(#cb)"/>
<rect x="5.5" y="1" width="5.5" height="4.2" fill="#dcdcdc" stroke="#9a9a9a" stroke-width="0.5"/>
<rect x="7.4" y="6.8" width="13.7" height="16.3" fill="#f4f4f4" stroke="#c8c8c8" stroke-width="0.6"/>
<path d="M9 10 H19 M9 12.5 H15.5 M9 15.5 H18.5 M9 18.4 H17" stroke="#8c96a6" stroke-width="0.7"/>
</svg>
<svg style="position:absolute;left:824px;top:753px;" width="23" height="10" viewBox="0 0 23 10">
<path d="M1 0.8 L3.9 3.5 L6.9 0.8" stroke="#6e6e6e" stroke-width="1.2" fill="none"/>
<rect x="3.3" y="3" width="1.3" height="6.2" fill="#6e6e6e"/>
<g fill="#6a6a6a"><rect x="8.2" y="8" width="2.2" height="1.5"/><rect x="12.3" y="8" width="2" height="1.5"/><rect x="16.1" y="8" width="2" height="1.5"/><rect x="19.9" y="8" width="2.3" height="1.5"/></g>
</svg>
<svg style="position:absolute;left:851px;top:747px;" width="17" height="17" viewBox="0 0 17 17">
<path d="M1 6 L3.2 6 L6.6 2.1 L6.6 15.1 L3.2 11.2 L1 11.2 Z" fill="#8c8c8c"/>
<rect x="8.1" y="6.7" width="1.9" height="3.1" fill="#8c8c8c"/>
<rect x="11" y="4" width="1.8" height="9.2" fill="#8c8c8c"/>
<rect x="13.8" y="1" width="2.3" height="14.8" fill="#8c8c8c"/>
</svg>
<svg style="position:absolute;left:874px;top:744px;" width="37" height="23" viewBox="0 0 37 23">
<rect x="0" y="0" width="37" height="22.5" fill="#050505"/>
<path d="M0 22.5 L0 20 L1.5 19 L2.5 2.5 L3.5 2.5 L4.3 20 L6 21 L8 21.5 L8.5 13.5 L9.2 13.5 L9.8 21 L11.5 21 L12.2 12.5 L12.9 12.5 L13.5 19 L14.5 16 L15.3 14.5 L16 18.5 L17.3 18 L18 5 L19.2 0 L20 4.5 L20.8 8 L21.5 17 L22.5 20 L23.5 14 L24 14 L24.8 20.5 L26 19.5 L27 16 L28 16.5 L28.8 20 L30 21 L32 21.5 L33 20.5 L35.5 21 L36 13.5 L36.6 13.5 L37 22.5 Z" fill="#1e9a1e"/>
</svg>
<div style="position:absolute;left:912px;top:743px;width:10px;height:25px;box-sizing:border-box;border:1px solid #061206;background:linear-gradient(90deg,#3ade22 0%,#3ade22 55%,#2fc81c 55%,#2fc81c 100%);"></div>
<svg style="position:absolute;left:923px;top:745px;" width="32" height="20" viewBox="0 0 32 20">
<rect x="0.5" y="0.5" width="31" height="19" fill="#3a0a10" opacity="0.55"/>
<rect x="1.5" y="1.2" width="29" height="16.6" fill="#f4eef0"/>
<g fill="#d8566a"><rect x="1.5" y="1.2" width="29" height="1.3"/><rect x="1.5" y="3.8" width="29" height="1.3"/><rect x="1.5" y="6.3" width="29" height="1.3"/><rect x="1.5" y="8.9" width="29" height="1.3"/><rect x="1.5" y="11.4" width="29" height="1.3"/><rect x="1.5" y="14" width="29" height="1.3"/><rect x="1.5" y="16.5" width="29" height="1.3"/></g>
<rect x="1.5" y="1.2" width="12.2" height="9" fill="#3c4f94"/>
<g fill="#aab4d8" opacity="0.7"><rect x="3" y="2.5" width="1" height="1"/><rect x="6" y="2.5" width="1" height="1"/><rect x="9" y="2.5" width="1" height="1"/><rect x="4.5" y="4.5" width="1" height="1"/><rect x="7.5" y="4.5" width="1" height="1"/><rect x="10.5" y="4.5" width="1" height="1"/><rect x="3" y="6.5" width="1" height="1"/><rect x="6" y="6.5" width="1" height="1"/><rect x="9" y="6.5" width="1" height="1"/></g>
</svg>
<span class="t" style="left:960.05px;top:748.84px;font-size:12px;line-height:12px;font-family:'Liberation Sans', sans-serif;font-weight:normal;color:#ffffff;transform:scaleX(1.1640);">08:34</span>
<svg style="position:absolute;left:1000px;top:742px;" width="24" height="24" viewBox="0 0 24 24">
<defs><linearGradient id="ub" x1="0" y1="0" x2="0" y2="1"><stop offset="0" stop-color="#e6e6e6"/><stop offset="1" stop-color="#bdbdbd"/></linearGradient>
<linearGradient id="ua" x1="0" y1="0" x2="1" y2="0"><stop offset="0" stop-color="#e8d89a"/><stop offset="1" stop-color="#a8cce8"/></linearGradient></defs>
<rect x="0" y="0" width="24" height="24" fill="#ffffff"/>
<ellipse cx="10.6" cy="6.3" rx="4.5" ry="5.3" fill="url(#ub)" stroke="#b0b0b0" stroke-width="0.5"/>
<path d="M2.3 20.5 Q2 14.5 6.5 13 L14.5 13 Q18 14 18 20 Q18 22 10 22.3 Q2.5 22.3 2.3 20.5 Z" fill="url(#ub)" stroke="#a8a8a8" stroke-width="0.5"/>
<path d="M9 14.6 L15.6 14.6 L15.6 12 L22.8 17.5 L15.6 22.3 L15.6 20 L9 20 Z" fill="url(#ua)" stroke="#50607a" stroke-width="0.7" stroke-linejoin="round"/>
</svg>
</body></html>
